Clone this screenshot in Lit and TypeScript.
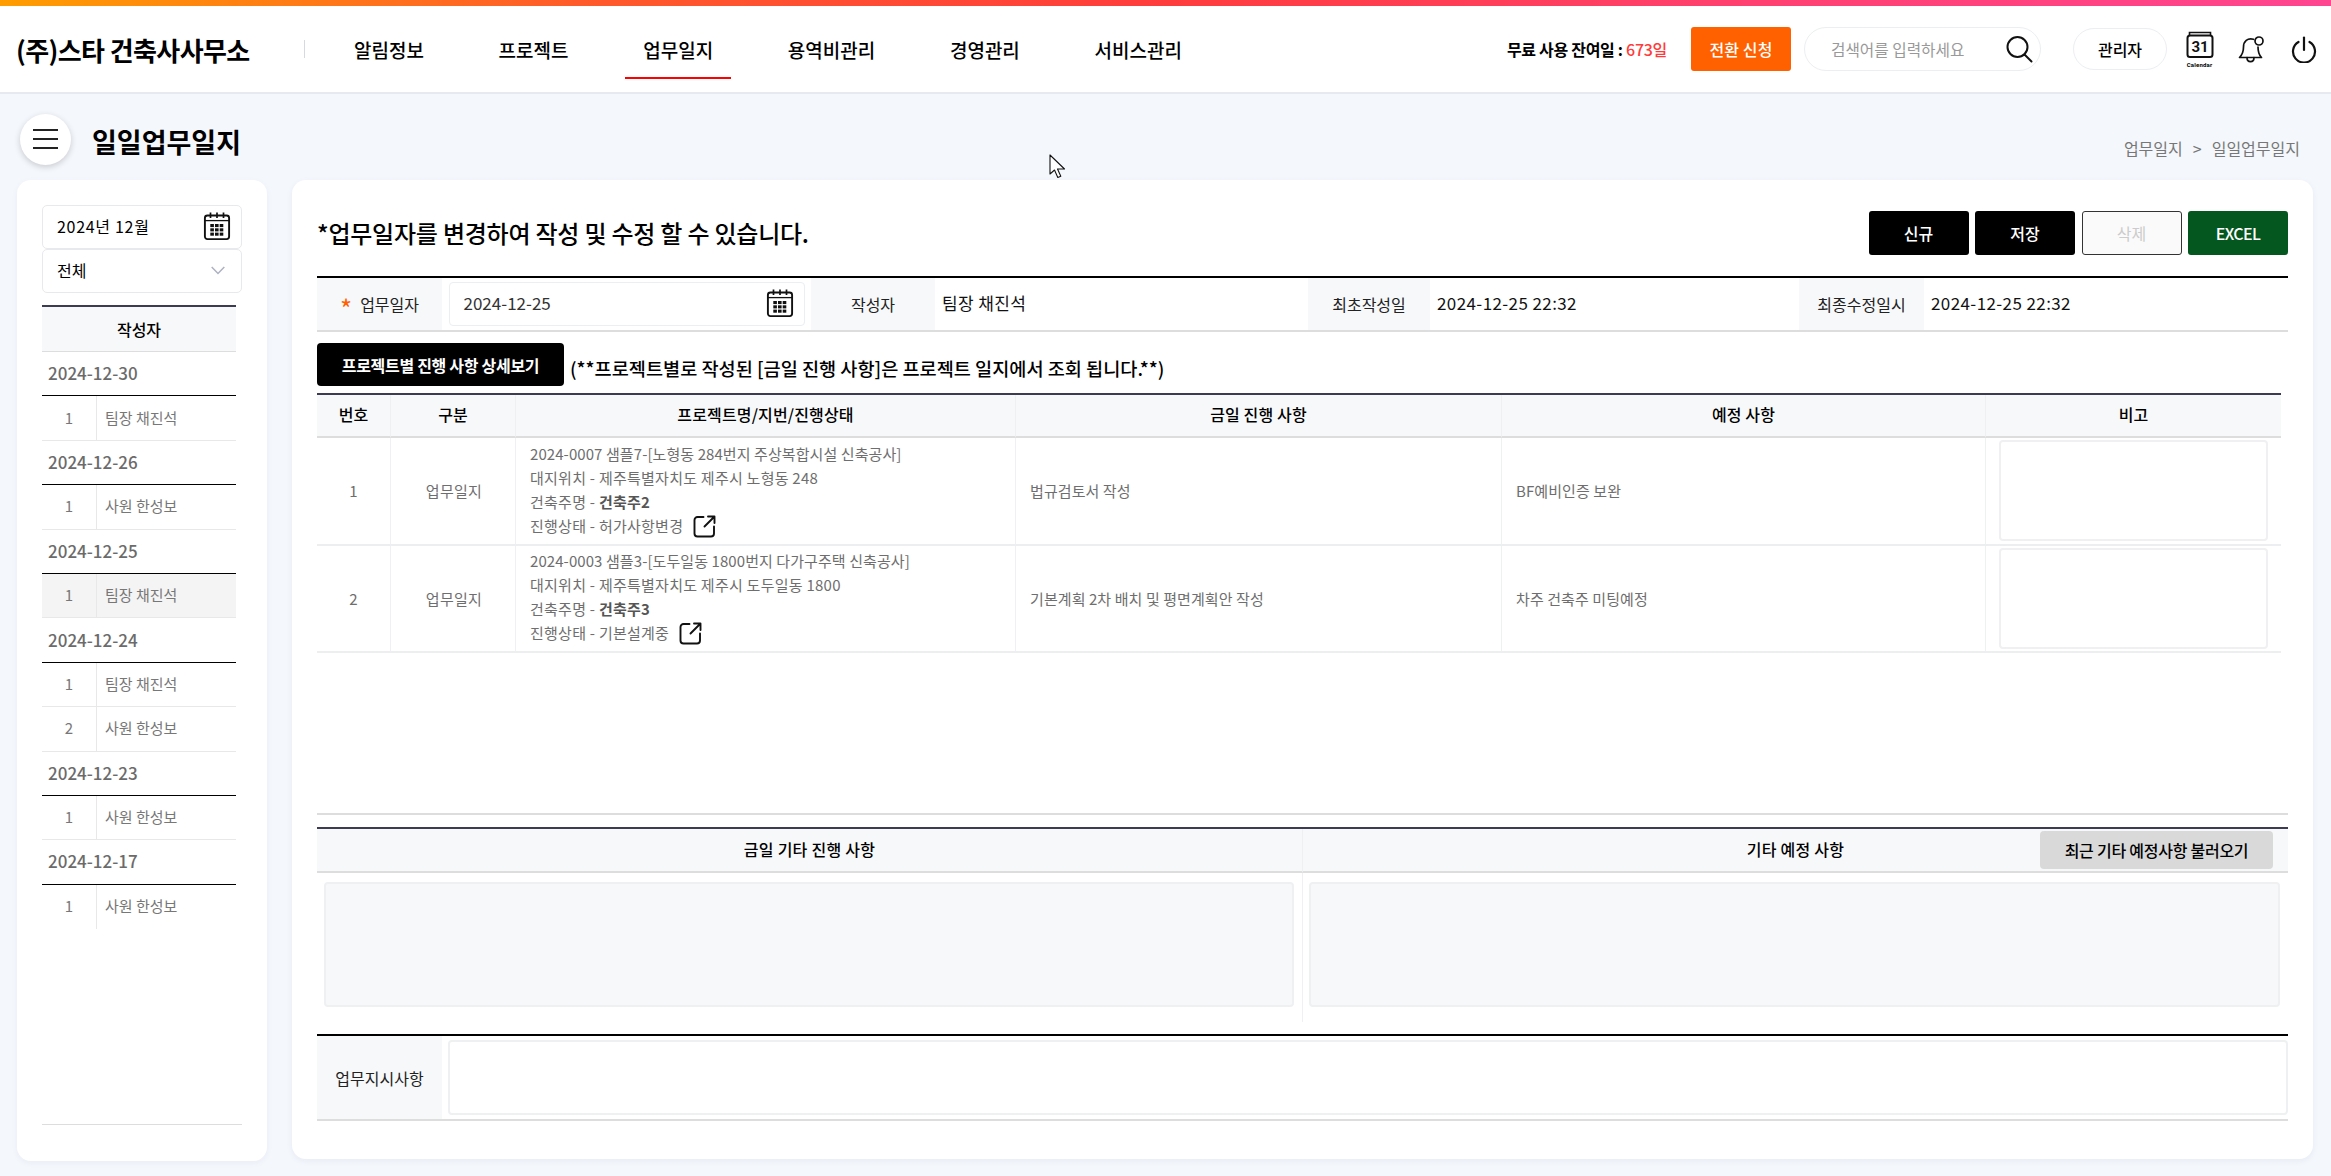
import { LitElement, html, css, svg } from "lit";
import { customElement } from "lit/decorators.js";

const calIcon = html`<svg width="28" height="30" viewBox="0 0 28 30" fill="none">
  <rect x="1.9" y="4.5" width="24.2" height="23.6" rx="2.5" stroke="#111" stroke-width="1.9" fill="#fff"/>
  <path d="M2 9.6H26" stroke="#111" stroke-width="1.3"/>
  ${[7.5, 14, 20.5].map((x) => svg`<path d="M${x} 1.5V7" stroke="#111" stroke-width="1.7"/>`)}
  ${[13, 17.3, 21.6].map((y) =>
    [7.3, 12, 16.7].map((x) => svg`<rect x=${x} y=${y} width="3.6" height="3.1" fill="#111"/>`)
  )}
</svg>`;

const extIcon = html`<svg class="ext" width="23" height="23" viewBox="0 0 23 23" fill="none" stroke="#111" stroke-width="1.9" stroke-linecap="round" stroke-linejoin="round">
  <path d="M10.5 2H4.5A3 3 0 0 0 1.5 5V18.5A3 3 0 0 0 4.5 21.5H18A3 3 0 0 0 21 18.5V11.5"/>
  <path d="M11.5 11.5L21 2M15 1.5H21.5V8"/>
</svg>`;

interface Row { date: string; people: string[] }
const rows: Row[] = [
  { date: "2024-12-30", people: ["팀장 채진석"] },
  { date: "2024-12-26", people: ["사원 한성보"] },
  { date: "2024-12-25", people: ["팀장 채진석"] },
  { date: "2024-12-24", people: ["팀장 채진석", "사원 한성보"] },
  { date: "2024-12-23", people: ["사원 한성보"] },
  { date: "2024-12-17", people: ["사원 한성보"] },
];

const projects = [
  { no: 1, name: "2024-0007 샘플7-[노형동 284번지 주상복합시설 신축공사]", site: "대지위치 - 제주특별자치도 제주시 노형동 248", owner: "건축주2", state: "진행상태 - 허가사항변경", today: "법규검토서 작성", plan: "BF예비인증 보완" },
  { no: 2, name: "2024-0003 샘플3-[도두일동 1800번지 다가구주택 신축공사]", site: "대지위치 - 제주특별자치도 제주시 도두일동 1800", owner: "건축주3", state: "진행상태 - 기본설계중", today: "기본계획 2차 배치 및 평면계획안 작성", plan: "차주 건축주 미팅예정" },
];

@customElement("app-root")
export class AppRoot extends LitElement {
  static styles = css`
    :host { display: block; position: relative; width: 2331px; height: 1176px; overflow: hidden; background: #f4f7fc; color: #000;
      font-family: "Noto Sans CJK KR", "Noto Sans", sans-serif; font-size: 16px; }
    * { box-sizing: border-box; }
    .topbar { height: 6px; background: linear-gradient(90deg, #ff9d00 0%, #ff5a2a 25%, #ff3c3c 50%, #ff4070 75%, #ff4590 100%); }
    header { height: 88px; background: #fff; border-bottom: 2px solid #e6e9f0; display: flex; align-items: center; }
    .logo { width: 304px; padding-left: 16px; font-size: 26px; font-weight: 700; letter-spacing: -0.6px; white-space: nowrap; }
    .sep { width: 1px; height: 18px; background: #d5d9e0; }
    nav { display: flex; gap: 38.7px; margin-left: 31px; align-self: stretch; }
    nav a { padding: 0 18px; font-size: 19px; font-weight: 500; display: flex; align-items: center; position: relative; white-space: nowrap; }
    nav a.on::after { content: ""; position: absolute; left: 0; right: 0; top: 71px; height: 2px; background: #f00; }
    .right { margin-left: auto; display: flex; align-items: center; padding-right: 14px; }
    .free { font-size: 16px; font-weight: 700; white-space: nowrap; margin-right: 24px; letter-spacing: -0.3px; }
    .free b { color: #ff3b3b; font-weight: 500; }
    .convert { width: 100px; height: 44px; background: #ff6000; color: #fff; border-radius: 3px; font-size: 16px; font-weight: 500; display: flex; align-items: center; justify-content: center; letter-spacing: .1px; }
    .search { width: 237px; height: 44px; margin-left: 13px; border: 1px solid #eceef1; border-radius: 22px; display: flex; align-items: center; justify-content: space-between; padding: 0 7px 0 26px; font-size: 15.7px; color: #999; }
    .admin { width: 94px; height: 42px; margin-left: 32px; border: 1px solid #eceef1; border-radius: 21px; display: flex; align-items: center; justify-content: center; font-size: 16px; font-weight: 500; }
    .calendar { margin-left: 18px; width: 29px; display: flex; flex-direction: column; align-items: center; }
    .calendar span { font: 700 6px/7px Roboto, sans-serif; letter-spacing: .2px; margin-top: 3px; white-space: nowrap; }
    .bell { margin-left: 24px; display: block; }
    .power { margin-left: 26px; display: block; }

    .sub { height: 86px; display: flex; align-items: center; padding: 0 31px 0 20px; }
    .burger { width: 51px; height: 51px; border-radius: 50%; background: #fff; box-shadow: 0 2px 6px rgba(0,0,0,.18); display: flex; flex-direction: column; justify-content: center; align-items: center; gap: 7px; margin-top: 4px; }
    .burger i { display: block; width: 25px; height: 2px; background: #222; }
    .sub h1 { margin: 8px 0 0 21px; font-size: 27px; font-weight: 700; white-space: nowrap; }
    .crumb { margin-left: auto; font-size: 16px; color: #777; display: flex; align-items: center; gap: 10px; margin-top: 22px; }

    .body { display: flex; padding-left: 17px; gap: 25px; }
    .side { width: 250px; height: 981px; background: #fff; border-radius: 14px; padding: 25px 25px 36px; display: flex; flex-direction: column; box-shadow: 0 2px 6px rgba(40,60,100,.05); }
    .field { height: 44px; width: 200px; border: 1px solid #e8e9ec; border-radius: 5px; display: flex; align-items: center; justify-content: space-between; padding: 0 10px 2px 14px; font-size: 16px; background: #fff; }
    .field .ym { letter-spacing: .7px; }
    .field .chev { margin-right: 6px; }
    .stable { width: 194px; margin-top: 12px; border-top: 2px solid #3c3b52; }
    .sth { height: 45px; background: #f7f8fa; border-bottom: 1px solid #ddd; display: flex; align-items: center; justify-content: center; font-weight: 500; font-size: 16px; }
    .sdate { height: 44.4px; border-bottom: 1px solid #000; display: flex; align-items: center; padding: 0 0 2px 6px; font-size: 17px; font-weight: 500; color: #6b6b6b; }
    .srow { height: 44.4px; border-bottom: 1px solid #e8e8e8; display: grid; grid-template-columns: 55px 1fr; font-size: 15px; color: #777; }
    .srow.last { border-bottom: 0; }
    .srow.sel { background: #f4f4f4; }
    .srow span { display: flex; align-items: center; padding-bottom: 2px; }
    .srow span:first-child { justify-content: center; border-right: 1px solid #e8e8e8; }
    .srow span:last-child { padding-left: 8px; }
    .sfoot { margin-top: auto; height: 1px; background: #ddd; }

    main { width: 2021px; height: 979px; background: #fff; border-radius: 14px; padding: 31px 25px 0 25px; box-shadow: 0 2px 6px rgba(40,60,100,.06); }
    .head { display: flex; align-items: center; height: 44px; }
    .head h2 { margin: 0 0 2px; font-size: 24px; font-weight: 500; letter-spacing: -0.22px; }
    .btns { margin-left: auto; display: flex; gap: 6.5px; }
    .btn { width: 100px; height: 44px; border-radius: 3px; background: #000; color: #fff; font-size: 16px; font-weight: 500; display: flex; align-items: center; justify-content: center; }
    .btn.off { background: #fafafa; border: 1px solid #333; color: #ccc; font-weight: 400; }
    .btn.xl { background: #04571f; letter-spacing: -0.6px; }

    .info { margin-top: 21px; border-top: 2px solid #000; border-bottom: 2px solid #ddd; height: 56px; display: grid; grid-template-columns: 125px 369px 124px 373px 122px 369px 125px 364px; }
    .lab { background: #f7f8fa; display: flex; align-items: center; justify-content: center; font-size: 16px; color: #222; }
    .lab em { color: #ff6000; font-style: normal; font-size: 26px; line-height: 1; padding-top: 8px; margin-right: 8px; }
    .val { display: flex; align-items: center; padding: 0 0 4px 7px; font-size: 17px; color: #111; letter-spacing: .4px; }
    .dateinp { margin: 4px 6px 4px 6.5px; border: 1px solid #eceef1; border-radius: 4px; display: flex; align-items: center; justify-content: space-between; padding: 0 10px 3px 14px; font-size: 17px; color: #333; }

    .notebar { margin-top: 11px; height: 43px; display: flex; align-items: center; gap: 6px; }
    .detail { width: 247px; height: 43px; background: #000; color: #fff; border-radius: 4px; font-size: 16px; font-weight: 700; display: flex; align-items: center; justify-content: center; letter-spacing: -0.3px; }
    .note { font-size: 18.6px; font-weight: 500; white-space: nowrap; padding-top: 5px; }

    .tablewrap { margin-top: 7px; height: 422px; border-bottom: 2px solid #ddd; }
    .grid { width: 1964px; display: grid; grid-template-columns: 74px 125px 500px 486px 484px 295px; border-top: 2px solid #3c3b52; }
    .th { height: 43px; background: #f7f8fa; border-bottom: 2px solid #ddd; border-right: 1px solid #eef0f2; display: flex; align-items: center; justify-content: center; padding-bottom: 4px; font-size: 16px; font-weight: 500; letter-spacing: .15px; }
    .th:nth-child(6) { border-right: 0; }
    .td { height: 107.5px; border-bottom: 2px solid #eceef0; border-right: 1px solid #eef0f2; display: flex; align-items: center; font-size: 15px; color: #6e6e6e; padding: 0 14px; letter-spacing: .08px; }
    .td.c { justify-content: center; padding: 0; }
    .td.c.kind { letter-spacing: .3px; padding-left: 2px; }
    .td.bigo { border-right: 0; padding: 0; justify-content: center; }
    .td.bigo div { width: 269px; height: 101px; border: 2px solid #f0f0f2; border-radius: 4px; }
    .lines { display: flex; flex-direction: column; line-height: 24px; white-space: nowrap; padding-bottom: 2px; }
    .lines span:not(:first-child) { letter-spacing: .25px; }
    .lines b { font-weight: 700; color: #555; }
    .ext { vertical-align: -6px; margin-left: 10px; }

    .etc { margin-top: 12px; border-top: 2px solid #3c3b52; display: grid; grid-template-columns: 986px 985px; }
    .eth { height: 44px; background: #f7f8fa; border-bottom: 2px solid #ddd; font-weight: 500; font-size: 16px; letter-spacing: .25px; display: grid; grid-template-columns: 1fr auto 1fr; align-items: center; }
    .eth:first-child { border-right: 1px solid #eef0f2; }
    .eth > span { grid-column: 2; padding-bottom: 2px; }
    .load { grid-column: 3; justify-self: end; width: 233px; height: 38px; margin-right: 15px; background: #d9d9d9; border-radius: 4px; font-size: 16px; letter-spacing: -0.25px; font-weight: 500; display: flex; align-items: center; justify-content: center; }
    .etd { height: 149px; padding: 9px 8px 0 6.5px; }
    .etd:nth-child(3) { border-right: 1px solid #eef0f2; }
    .etd:nth-child(4) { padding-left: 6px; }
    .etd div { height: 125px; background: #f7f8fa; border: 2px solid #eff0f2; border-radius: 4px; }

    .order { margin-top: 12px; border-top: 2px solid #000; border-bottom: 2px solid #ddd; height: 87px; display: grid; grid-template-columns: 125px 1fr; }
    .order .box { margin: 4px 0 4px 6px; border: 2px solid #eff0f2; border-radius: 4px; }

    .cursor { position: absolute; left: 1049px; top: 154px; }
  `;

  render() {
    return html`
      <div class="topbar"></div>
      <header>
        <div class="logo">(주)스타 건축사사무소</div>
        <div class="sep"></div>
        <nav>
          <a>알림정보</a><a>프로젝트</a><a class="on">업무일지</a><a>용역비관리</a><a>경영관리</a><a>서비스관리</a>
        </nav>
        <div class="right">
          <div class="free">무료 사용 잔여일 : <b>673일</b></div>
          <div class="convert">전환 신청</div>
          <div class="search">
            <span>검색어를 입력하세요</span>
            <svg width="28" height="28" viewBox="0 0 28 28" fill="none" stroke="#111" stroke-width="2"><circle cx="12.5" cy="12" r="10"/><path d="M19.5 19.5L26.5 26.5" stroke-linecap="round"/></svg>
          </div>
          <div class="admin">관리자</div>
          <div class="calendar">
            <svg width="28" height="27" viewBox="0 0 28 27" fill="none" stroke="#111">
              <path d="M3.5 4V1.5H24.5V4" stroke-width="1.6"/>
              <rect x="1.5" y="4.5" width="25" height="21.5" rx="2.5" stroke-width="2" fill="#fff"/>
              <text x="14" y="21" text-anchor="middle" font-family="Roboto, sans-serif" font-weight="700" font-size="15" fill="#111" stroke="none">31</text>
            </svg>
            <span>Calendar</span>
          </div>
          <svg class="bell" width="27" height="28" viewBox="0 0 27 28" fill="none" stroke="#111" stroke-width="1.7" stroke-linejoin="round" stroke-linecap="round">
            <path d="M15.5 4.3C9.5 2.5 5.5 6.5 5.5 12C5.5 17 4.5 19.5 1.5 22.5H23.5C21 20 20 17.5 20 12"/>
            <circle cx="21" cy="6" r="4"/>
            <path d="M9 22.5C9 28 16 28 16 22.5"/>
          </svg>
          <svg class="power" width="26" height="27" viewBox="0 0 26 27" fill="none" stroke="#111" stroke-width="2.2" stroke-linecap="round">
            <path d="M13 1.5V14"/>
            <path d="M7.5 6A11 11 0 1 0 18.5 6"/>
          </svg>
        </div>
      </header>
      <div class="sub">
        <div class="burger"><i></i><i></i><i></i></div>
        <h1>일일업무일지</h1>
        <div class="crumb"><span>업무일지</span><span>&gt;</span><span>일일업무일지</span></div>
      </div>
      <div class="body">
        <aside class="side">
          <div class="field"><span class="ym">2024년 12월</span>${calIcon}</div>
          <div class="field"><span>전체</span>
            <svg class="chev" width="14" height="9" viewBox="0 0 14 9" fill="none" stroke="#aeb1c0" stroke-width="1.5"><path d="M.7 1L7 7.5L13.3 1"/></svg>
          </div>
          <div class="stable">
            <div class="sth">작성자</div>
            ${rows.map((r, ri) => html`
              <div class="sdate">${r.date}</div>
              ${r.people.map((p, i) => html`<div class="srow ${ri === 2 ? "sel" : ""} ${ri === 5 ? "last" : ""}"><span>${i + 1}</span><span>${p}</span></div>`)}
            `)}
          </div>
          <div class="sfoot"></div>
        </aside>
        <main>
          <div class="head">
            <h2>*업무일자를 변경하여 작성 및 수정 할 수 있습니다.</h2>
            <div class="btns">
              <div class="btn">신규</div><div class="btn">저장</div><div class="btn off">삭제</div><div class="btn xl">EXCEL</div>
            </div>
          </div>
          <div class="info">
            <div class="lab"><em>*</em>업무일자</div>
            <div class="dateinp"><span>2024-12-25</span>${calIcon}</div>
            <div class="lab">작성자</div>
            <div class="val">팀장 채진석</div>
            <div class="lab">최초작성일</div>
            <div class="val">2024-12-25 22:32</div>
            <div class="lab">최종수정일시</div>
            <div class="val">2024-12-25 22:32</div>
          </div>
          <div class="notebar">
            <div class="detail">프로젝트별 진행 사항 상세보기</div>
            <div class="note">(**프로젝트별로 작성된 [금일 진행 사항]은 프로젝트 일지에서 조회 됩니다.**)</div>
          </div>
          <div class="tablewrap">
            <div class="grid">
              <div class="th">번호</div><div class="th">구분</div><div class="th">프로젝트명/지번/진행상태</div>
              <div class="th">금일 진행 사항</div><div class="th">예정 사항</div><div class="th">비고</div>
              ${projects.map((p) => html`
                <div class="td c">${p.no}</div>
                <div class="td c kind">업무일지</div>
                <div class="td"><div class="lines">
                  <span>${p.name}</span>
                  <span>${p.site}</span>
                  <span>건축주명 - <b>${p.owner}</b></span>
                  <span>${p.state}${extIcon}</span>
                </div></div>
                <div class="td">${p.today}</div>
                <div class="td">${p.plan}</div>
                <div class="td bigo"><div></div></div>
              `)}
            </div>
          </div>
          <div class="etc">
            <div class="eth"><span>금일 기타 진행 사항</span></div>
            <div class="eth"><span>기타 예정 사항</span><div class="load">최근 기타 예정사항 불러오기</div></div>
            <div class="etd"><div></div></div>
            <div class="etd"><div></div></div>
          </div>
          <div class="order">
            <div class="lab">업무지시사항</div>
            <div class="box"></div>
          </div>
        </main>
      </div>
      <svg class="cursor" width="18" height="25" viewBox="0 0 18 25">
        <path d="M1 1V20L5.5 16L8.8 23.5L11.8 22.2L8.5 15H15.5Z" fill="#fff" stroke="#111" stroke-width="1.1" stroke-linejoin="round"/>
      </svg>
    `;
  }
}
